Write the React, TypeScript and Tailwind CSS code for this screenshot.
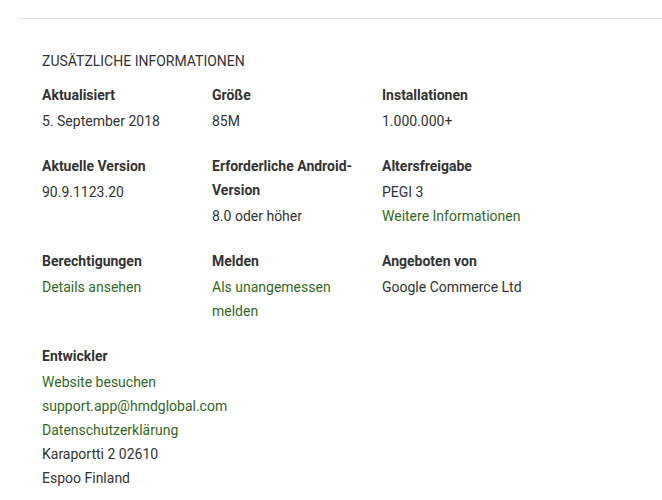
const link = 'text-[#33691e]';

interface Item {
  label: string;
  lines: { text: string; href?: boolean }[];
}

const items: Item[] = [
  { label: 'Aktualisiert', lines: [{ text: '5. September 2018' }] },
  { label: 'Größe', lines: [{ text: '85M' }] },
  { label: 'Installationen', lines: [{ text: '1.000.000+' }] },
  { label: 'Aktuelle Version', lines: [{ text: '90.9.1123.20' }] },
  { label: 'Erforderliche Android-Version', lines: [{ text: '8.0 oder höher' }] },
  {
    label: 'Altersfreigabe',
    lines: [{ text: 'PEGI 3' }, { text: 'Weitere Informationen', href: true }],
  },
  { label: 'Berechtigungen', lines: [{ text: 'Details ansehen', href: true }] },
  { label: 'Melden', lines: [{ text: 'Als unangemessen melden', href: true }] },
  { label: 'Angeboten von', lines: [{ text: 'Google Commerce Ltd' }] },
];

const developer = [
  { text: 'Website besuchen', href: true },
  { text: 'support.app@hmdglobal.com', href: true },
  { text: 'Datenschutzerklärung', href: true },
  { text: 'Karaportti 2 02610' },
  { text: 'Espoo Finland' },
];

function Cell({ label, lines, wide }: Item & { wide?: boolean }) {
  return (
    <div className={wide ? 'col-span-3' : 'pr-[18px]'}>
      <div className="font-bold leading-6 text-[#333]">{label}</div>
      <div className="mt-0.5">
        {lines.map((l) => (
          <div key={l.text} className={`leading-6 ${l.href ? link : 'text-[#333]'}`}>
            {l.text}
          </div>
        ))}
      </div>
    </div>
  );
}

export default function App() {
  return (
    <div className="min-h-[500px] bg-white pt-[18px] font-['Roboto',sans-serif] text-[14px]">
      <div className="ml-[18px] h-px bg-[#e8e8e8]" />
      <div className="px-[42px] pt-[30px]">
        <h2 className="mb-[10px] leading-6 text-[#333] uppercase">Zusätzliche Informationen</h2>
        <div className="grid w-[510px] grid-cols-3 gap-y-[21px]">
          {items.map((it) => (
            <Cell key={it.label} {...it} />
          ))}
          <Cell label="Entwickler" lines={developer} wide />
        </div>
      </div>
    </div>
  );
}
